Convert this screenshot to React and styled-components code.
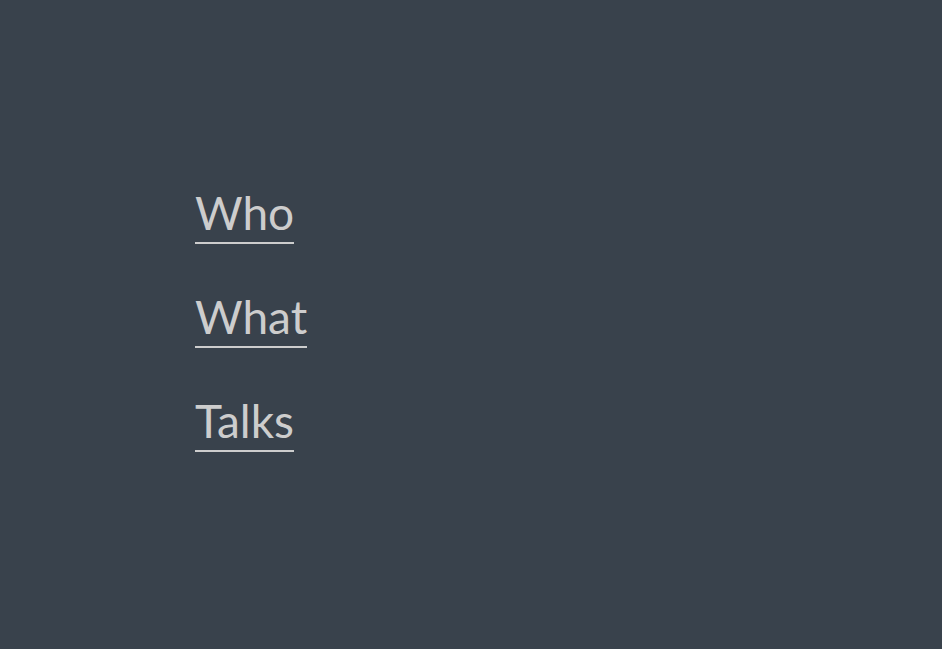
import React from 'react'
import styled, { createGlobalStyle } from 'styled-components'

const GlobalStyle = createGlobalStyle`
  html, body {
    margin: 0;
    padding: 0;
    background: #39424c;
  }
`

const Page = styled.div`
  min-height: 649px;
  background: #39424c;
  padding: 186px 0 0 195px;
  box-sizing: border-box;
`

const Nav = styled.nav`
  display: flex;
  flex-direction: column;
  align-items: flex-start;
  gap: 46px;
`

const Link = styled.a`
  font-family: Lato, sans-serif;
  font-size: 46px;
  line-height: 54px;
  color: #cdcdcd;
  text-decoration: none;
  border-bottom: 2px solid #cdcdcd;
  padding-bottom: 2px;
  cursor: pointer;
`

export default function App() {
  return (
    <>
      <GlobalStyle />
      <Page>
        <Nav>
          <Link>Who</Link>
          <Link>What</Link>
          <Link>Talks</Link>
        </Nav>
      </Page>
    </>
  )
}
